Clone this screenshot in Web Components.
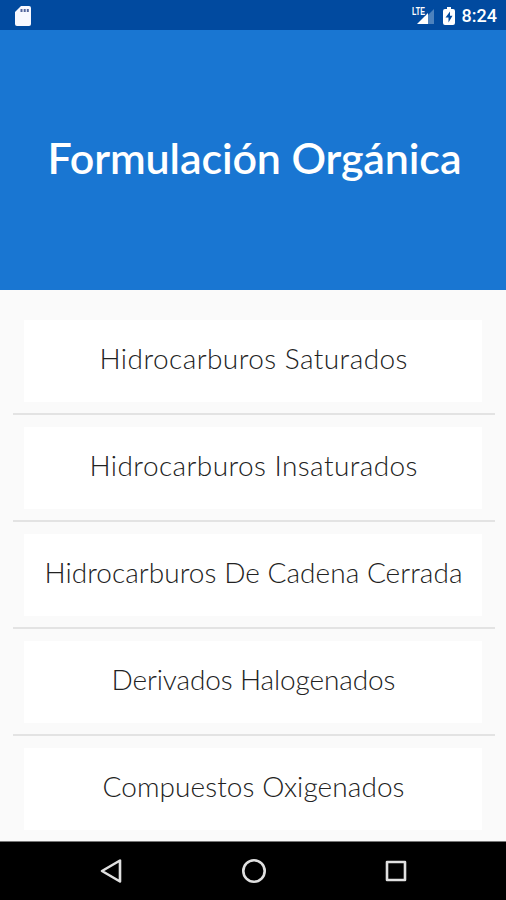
<!DOCTYPE html>
<html lang="es">
<head>
<meta charset="utf-8">
<title>Formulación Orgánica</title>
<style>
  html, body { margin: 0; height: 100%; }
  body { background: #fafafa; overflow: hidden; }
</style>
</head>
<body>
<app-screen>
  <status-bar slot="status" time="8:24"></status-bar>
  <app-header slot="header"><fit-text width="414">Formulación Orgánica</fit-text></app-header>
  <menu-item><fit-text width="308">Hidrocarburos Saturados</fit-text></menu-item>
  <menu-item><fit-text width="328">Hidrocarburos Insaturados</fit-text></menu-item>
  <menu-item><fit-text width="418">Hidrocarburos De Cadena Cerrada</fit-text></menu-item>
  <menu-item><fit-text width="284">Derivados Halogenados</fit-text></menu-item>
  <menu-item><fit-text width="302">Compuestos Oxigenados</fit-text></menu-item>
  <nav-bar slot="nav"></nav-bar>
</app-screen>

<script>
const define = (name, html, setup) => {
  const template = document.createElement('template');
  template.innerHTML = html;

  window.customElements.define(name, class extends HTMLElement {
    constructor() {
      super();
      this._root = this.attachShadow({ mode: 'open' });
      this._root.appendChild(template.content.cloneNode(true));
    }

    connectedCallback() {
      if (setup) setup(this, this._root);
    }
  });
};

define('app-screen', `
<style>
  :host {
    display: flex;
    flex-direction: column;
    width: 506px;
    height: 900px;
    overflow: hidden;
    background: #fafafa;
  }
  main { flex: 1; min-height: 0; padding: 18px 11px 0 13px; overflow: hidden; }
</style>
<slot name="status"></slot>
<slot name="header"></slot>
<main><slot></slot></main>
<slot name="nav"></slot>
`);

define('status-bar', `
<style>
  :host {
    display: flex;
    align-items: center;
    justify-content: space-between;
    box-sizing: border-box;
    height: 30px;
    padding: 1px 9px 0 15px;
    background: #014a9f;
    color: #fff;
    font: 500 18px/29px Roboto, sans-serif;
  }
  svg { display: block; }
  .right { display: flex; align-items: center; }
  .signal { margin-right: 8px; }
  .battery { margin-right: 7px; }
  .lte { font: 700 11px "Liberation Sans", sans-serif; }
</style>
<svg width="17" height="20" viewBox="0 0 17 20">
  <path fill="#f8f8ff" d="M6 0h8q2 0 2 2v16q0 2-2 2H2q-2 0-2-2V6z"/>
  <path stroke="#52649b" stroke-width="2" d="M6.5 3v3M9.7 3v3M12.8 3v3"/>
</svg>
<div class="right">
  <svg class="signal" width="23" height="20" viewBox="0 0 23 20">
    <path fill="#4d82bd" d="M22 3v15H16V9z"/>
    <path fill="#fff" d="M16 7v11H5z"/>
    <text class="lte" x="0" y="8.500" fill="#fff" stroke="#014a9f" stroke-width="1.500" paint-order="stroke" textLength="13" lengthAdjust="spacingAndGlyphs">LTE</text>
  </svg>
  <svg class="battery" width="12" height="18" viewBox="0 0 12 18">
    <path fill="#fff" d="M4 0h4v2h2q2 0 2 2v12q0 2-2 2H2q-2 0-2-2V4q0-2 2-2h2z"/>
    <path fill="#014a9f" d="M7 4.500L2.500 10.500H5.500V15.500L9.500 8.800H7z"/>
  </svg>
  <span></span>
</div>
`, (el, root) => {
  root.querySelector('span').textContent = el.getAttribute('time');
});

define('app-header', `
<style>
  :host {
    display: flex;
    align-items: center;
    justify-content: center;
    box-sizing: border-box;
    height: 260px;
    padding: 0 0 4px 3px;
    background: #1976d2;
    color: #fff;
    font: 600 43px/52px Lato, sans-serif;
  }
</style>
<slot></slot>
`);

define('menu-item', `
<style>
  :host {
    display: block;
    padding: 12px 0 11px;
    border-bottom: 2px solid #e3e3e3;
  }
  :host(:last-of-type) { border-color: transparent; }
  .card {
    display: flex;
    align-items: center;
    justify-content: center;
    box-sizing: border-box;
    height: 82px;
    margin: 0 13px 0 11px;
    padding: 0 0 6px 1px;
    background: #fff;
    color: #222;
    font: 300 28px/36px Lato, sans-serif;
  }
</style>
<div class="card"><slot></slot></div>
`);

// Spreads a single line of text over a given width
define('fit-text', `
<style>
  :host { display: block; white-space: nowrap; }
</style>
<slot></slot>
`, (el) => {
  const spread = el.getAttribute('width') - el.getBoundingClientRect().width;
  const gap = spread / (el.textContent.length - 1);
  el.style.letterSpacing = `${gap}px`;
  el.style.marginRight = `${-gap}px`;
});

define('nav-bar', `
<style>
  :host {
    display: flex;
    align-items: center;
    justify-content: space-between;
    box-sizing: border-box;
    height: 59px;
    padding: 0 98px 0 99px;
    border-top: 1px solid #777;
    background: #000;
  }
  svg { display: block; fill: none; stroke: #e0e0e0; stroke-width: 2.600; stroke-linejoin: round; }
</style>
<svg width="24" height="26" viewBox="0 0 24 26"><path d="M21 2.500v21L3 13z"/></svg>
<svg width="26" height="26" viewBox="0 0 26 26"><circle cx="13" cy="13" r="10.700"/></svg>
<svg width="24" height="26" viewBox="0 0 24 26"><path d="M3 4h18v18H3z"/></svg>
`);
</script>
</body>
</html>
